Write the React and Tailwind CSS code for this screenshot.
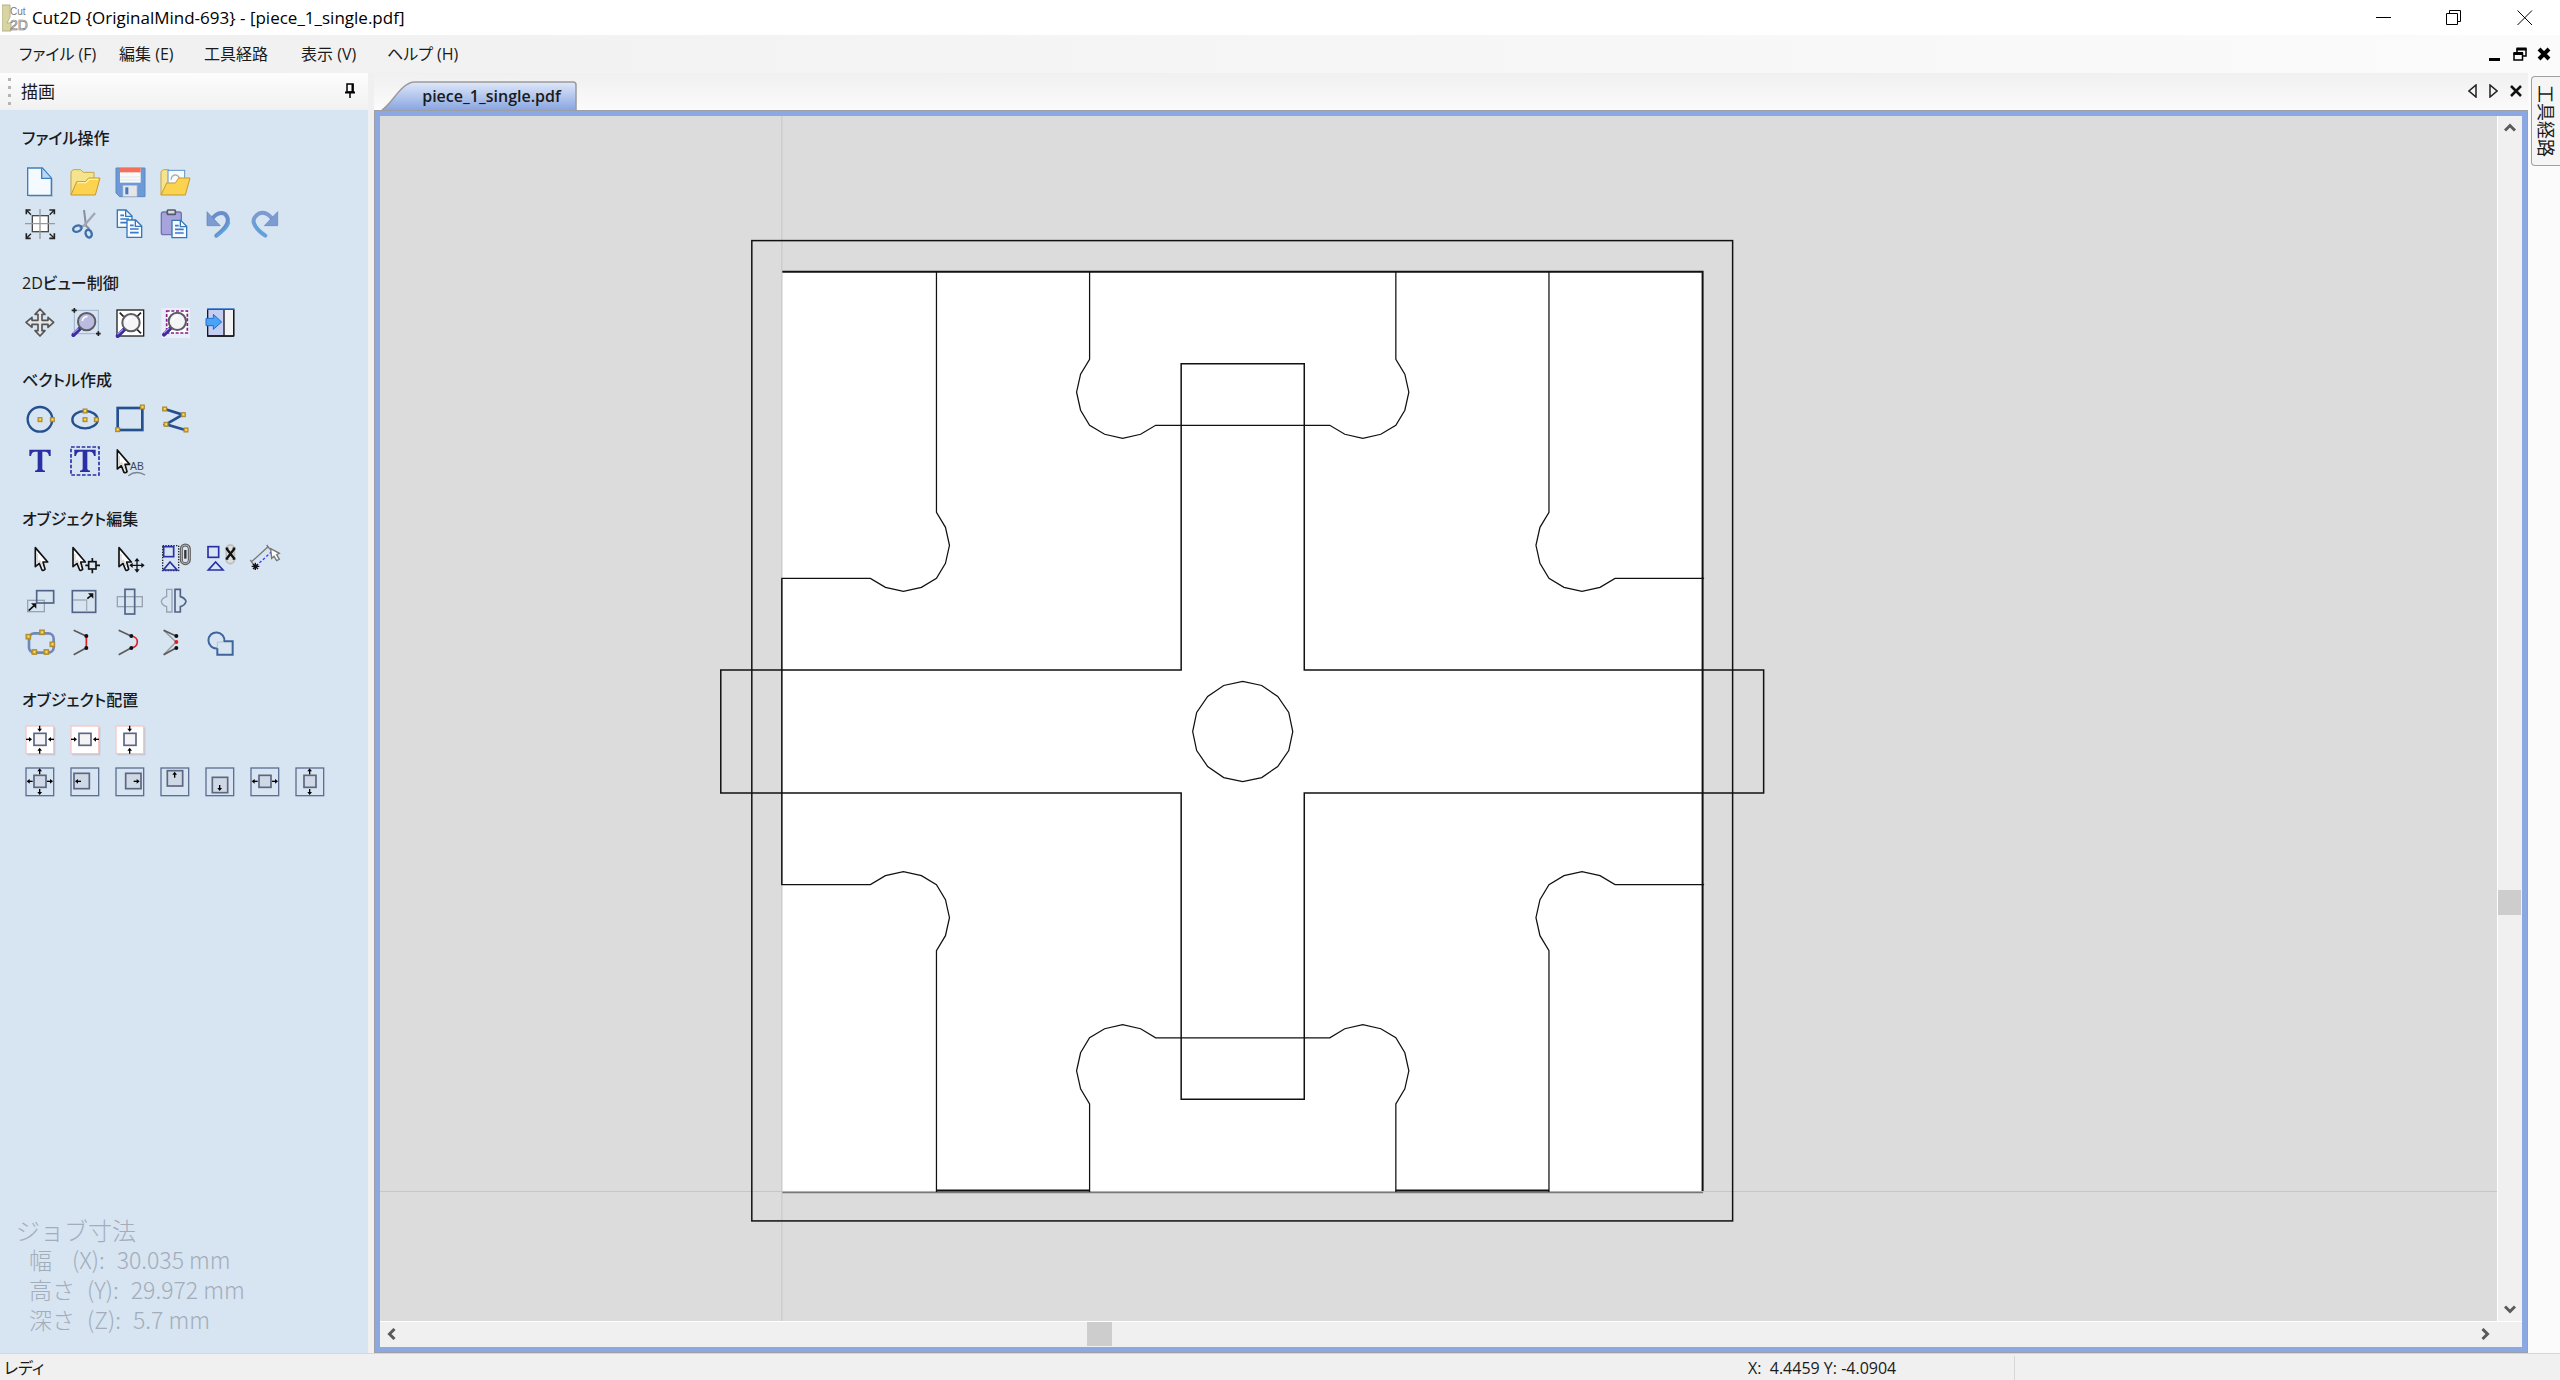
import React from 'react';

const SANS = "font-['Open_Sans','Noto_Sans_CJK_JP',sans-serif]";

/* ---------- shared icon pieces (90 x 90 grid) ---------- */

const Svg = ({ children }) => (
  <svg viewBox="0 0 90 90" className="size-[30px] overflow-visible" fill="none" aria-hidden="true">
    {children}
  </svg>
);

const Node = ({ x, y, s = 12 }) => (
  <g>
    <rect x={x - s / 2} y={y - s / 2} width={s} height={s} fill="#d9a62a" stroke="#a8882f" strokeWidth="3" />
    <rect x={x - 2} y={y - 3} width="5" height="5" fill="#ffe873" />
  </g>
);

const Pointer = ({ x = 0, y = 0, k = 1 }) => (
  <g transform={`translate(${x} ${y}) scale(${k})`}>
    <path d="M2 1V58L14 48L22 68Q27 71 31 66L25 44H39Z" fill="#fff" stroke="#111" strokeWidth="5" strokeLinejoin="round" />
    <path d="M8 20V46L15 39L24 58" stroke="#d5d5d5" strokeWidth="4" />
  </g>
);

const Lens = ({ x, y, r, fill }) => (
  <g>
    <path d={`M${x - r * 0.7} ${y + r * 0.7}L${x - r - 14} ${y + r + 14}`} stroke="#3d2a9e" strokeWidth="12" strokeLinecap="round" />
    <path d={`M${x - r * 0.8 - 4} ${y + r * 0.7 + 2}L${x - r - 15} ${y + r + 9}`} stroke="#a79be8" strokeWidth="4" />
    <circle cx={x} cy={y} r={r} fill={fill} stroke="#5c5c64" strokeWidth="6" />
    <path d={`M${x - r * 0.5} ${y - r * 0.1}Q${x - r * 0.4} ${y - r * 0.6} ${x + r * 0.1} ${y - r * 0.6}`} stroke="#fff" strokeWidth="5" />
  </g>
);

const TinyArrow = ({ x, y, dir }) => {
  const turn = { right: 0, down: 90, left: 180, up: 270 }[dir];
  return (
    <g transform={`translate(${x} ${y}) rotate(${turn})`}>
      <path d="M-9 0H4" stroke="#000" strokeWidth="4" />
      <path d="M0 -7L9 0L0 7Z" fill="#000" />
    </g>
  );
};

/* ---------- icons ---------- */

const NewFile = () => (
  <Svg>
    <path d="M12 6H56L84 36V90H12Z" fill="#9db3c8" opacity=".6" />
    <path d="M8 3H52L79 33V85H8Z" fill="#f4faff" stroke="#3c7fbd" strokeWidth="4" />
    <path d="M50 4V34H78" fill="#b9d9f5" stroke="#3c7fbd" strokeWidth="4" />
  </Svg>
);

const OpenFolder = () => (
  <Svg>
    <path d="M3 84V14L10 8H32L40 16H72V36" fill="#f6e38e" stroke="#c2a54a" strokeWidth="3" />
    <path d="M3 84L20 44H46L56 33H90L76 84Z" fill="#fbd34f" stroke="#c39a2e" strokeWidth="3" />
    <path d="M22 47H48L57 37H84" stroke="#fff1a8" strokeWidth="4" />
  </Svg>
);

const Save = () => (
  <Svg>
    <path d="M3 3H90V89H14L3 78Z" fill="#6c9ad6" stroke="#5c86c0" strokeWidth="3" />
    <rect x="15" y="3" width="62" height="44" fill="#fafafa" />
    <rect x="15" y="3" width="62" height="13" fill="#f4705c" />
    <path d="M15 30H77M15 39H77" stroke="#dfe6ee" strokeWidth="3" />
    <rect x="24" y="55" width="42" height="33" fill="#e4e6ea" stroke="#b9bec8" strokeWidth="2" />
    <rect x="31" y="61" width="9" height="21" fill="#3f78bd" />
  </Svg>
);

const OpenSheet = () => (
  <Svg>
    <path d="M3 84V14L10 8H26L32 14V84" fill="#f6e38e" stroke="#c2a54a" strokeWidth="3" />
    <rect x="24" y="10" width="50" height="44" fill="#f7fbff" stroke="#5b95cc" strokeWidth="3" />
    <path d="M34 38A12 12 0 1 1 58 34" stroke="#a9a9a9" strokeWidth="4" />
    <path d="M3 84L20 48H46L56 33H90L76 84Z" fill="#fbd34f" stroke="#c39a2e" strokeWidth="3" />
  </Svg>
);

const JobSetup = () => (
  <Svg>
    <rect x="22" y="20" width="48" height="48" fill="#fff" stroke="#4a4a4a" strokeWidth="4" />
    <path d="M45 0V90M0 44H90" stroke="#9a9a9a" strokeWidth="4" />
    <path d="M4 16V3H17M73 3H88V16M4 73V88H17M73 88H88V73" stroke="#222" strokeWidth="5" />
    <path d="M4 3L18 17M88 3L74 17M4 88L18 74M88 88L74 74" stroke="#222" strokeWidth="4" />
  </Svg>
);

const Cut = () => (
  <Svg>
    <path d="M42 3L48 50L58 60" stroke="#8a8f9d" strokeWidth="6" />
    <path d="M75 12L42 50L28 56" stroke="#a2a7b5" strokeWidth="7" />
    <ellipse cx="22" cy="59" rx="13" ry="9" stroke="#3f6fa9" strokeWidth="7" transform="rotate(-20 22 59)" />
    <ellipse cx="56" cy="74" rx="9" ry="12" stroke="#3f6fa9" strokeWidth="7" transform="rotate(-20 56 74)" />
  </Svg>
);

const Sheet = ({ x, y }) => (
  <g transform={`translate(${x} ${y})`}>
    <path d="M0 0H26L44 18V52H0Z" fill="#f7fbff" stroke="#3578b8" strokeWidth="4" />
    <path d="M25 0V19H44" stroke="#3578b8" strokeWidth="4" />
    <path d="M9 16H20M9 27H35M9 38H35" stroke="#3b79c9" strokeWidth="5" />
  </g>
);

const Copy = () => (
  <Svg>
    <Sheet x={7} y={3} />
    <Sheet x={36} y={33} />
  </Svg>
);

const Paste = () => (
  <Svg>
    <rect x="4" y="9" width="60" height="68" rx="6" fill="#a6a3dd" stroke="#6f73b4" strokeWidth="4" />
    <rect x="22" y="3" width="24" height="13" rx="2" fill="#d9d9e2" stroke="#555a6a" strokeWidth="5" />
    <Sheet x={36} y={34} />
  </Svg>
);

const Undo = () => (
  <Svg>
    <path d="M16 36Q38 4 60 15Q86 40 34 80" stroke="#6a8ecb" strokeWidth="12" strokeLinecap="round" />
    <path d="M6 8V50H46Z" fill="#7c9bd0" stroke="#5f83bf" strokeWidth="2" />
    <path d="M72 42Q66 62 36 80" stroke="#5aa4dc" strokeWidth="7" strokeLinecap="round" />
  </Svg>
);

const Redo = () => (
  <Svg>
    <path d="M72 36Q50 4 28 13Q-14 38 46 80" stroke="#7c9bd0" strokeWidth="12" strokeLinecap="round" />
    <path d="M83 8V50H43Z" fill="#7c9bd0" stroke="#5f83bf" strokeWidth="2" />
    <path d="M14 42Q18 60 45 80" stroke="#5aa4dc" strokeWidth="7" strokeLinecap="round" />
  </Svg>
);

const Pan = () => (
  <Svg>
    <path
      d="M45 3L60 19H51V37H69V28L86 43L69 58V49H51V68H60L45 84L30 68H39V49H21V58L3 43L21 28V37H39V19H30Z"
      fill="#e6e6e6"
      stroke="#555"
      strokeWidth="5"
      strokeLinejoin="round"
    />
  </Svg>
);

const ZoomInteractive = () => (
  <Svg>
    <rect x="13" y="7" width="72" height="70" stroke="#9fb3d0" strokeWidth="3" />
    <path d="M13 0V14M5 7H20M85 70V84M78 77H92" stroke="#222" strokeWidth="5" />
    <Lens x={50} y={41} r={26} fill="#b9bce0" />
  </Svg>
);

const ZoomBox = () => (
  <Svg>
    <rect x="6" y="6" width="80" height="78" fill="#fff" stroke="#222" strokeWidth="4" />
    <path d="M14 14L26 26M78 14L66 26M78 76L66 64" stroke="#222" strokeWidth="5" />
    <Lens x={48} y={44} r={26} fill="#f5f5f8" />
  </Svg>
);

const ZoomSelected = () => (
  <Svg>
    <rect x="4" y="0" width="86" height="90" fill="#e9eef8" />
    <rect x="20" y="9" width="62" height="66" fill="#fff" stroke="#8a1a8a" strokeWidth="5" strokeDasharray="9 5" />
    <Lens x={52} y={40} r={26} fill="#f5f5f8" />
  </Svg>
);

const SwitchView = () => (
  <Svg>
    <path d="M8 4H86V84H8Z" fill="#c5cef0" stroke="#16181d" strokeWidth="4" />
    <rect x="58" y="6" width="26" height="76" fill="#f2f2f4" />
    <path d="M57 4V84M86 4V84M8 84H86" stroke="#16181d" strokeWidth="4" />
    <path d="M6 3H88" stroke="#2f7fe0" strokeWidth="4" />
    <path d="M3 31H25V19L50 42L25 64V53H3Z" fill="#4aa3f7" stroke="#1f6fd0" strokeWidth="3" />
  </Svg>
);

const CircleTool = () => (
  <Svg>
    <circle cx="45" cy="43" r="37" stroke="#24508f" strokeWidth="7" />
    <Node x={45} y={44} />
    <Node x={82} y={44} />
  </Svg>
);

const EllipseTool = () => (
  <Svg>
    <ellipse cx="45" cy="44" rx="38" ry="26" stroke="#24508f" strokeWidth="7" />
    <Node x={45} y={18} />
    <Node x={45} y={44} />
    <Node x={79} y={44} />
  </Svg>
);

const RectTool = () => (
  <Svg>
    <rect x="8" y="9" width="74" height="66" stroke="#24508f" strokeWidth="8" />
    <Node x={82} y={6} />
    <Node x={8} y={74} />
  </Svg>
);

const PolylineTool = () => (
  <Svg>
    <path d="M14 12L68 29L18 58L76 75" stroke="#24508f" strokeWidth="8" />
    <Node x={14} y={12} />
    <Node x={70} y={29} />
    <Node x={18} y={58} />
    <Node x={78} y={75} />
  </Svg>
);

const SerifT = () => (
  <path d="M13 8H77V27H72Q70 14 60 14H52V66Q52 70 60 71V75H30V71Q38 70 38 66V14H30Q20 14 18 27H13Z" fill="#2a2fa6" />
);

const TextTool = () => (
  <Svg>
    <SerifT />
  </Svg>
);

const AutoText = () => (
  <Svg>
    <rect x="3" y="0" width="84" height="84" stroke="#2a2fa6" strokeWidth="5" strokeDasharray="11 5" />
    <SerifT />
  </Svg>
);

const TextSelect = () => (
  <Svg>
    <Pointer x={5} y={8} />
    <text x="45" y="70" fontSize="31" fill="#3d4856" className="font-['Liberation_Sans',sans-serif]">AB</text>
    <path d="M40 86Q64 68 90 84" stroke="#76828f" strokeWidth="4" />
  </Svg>
);

const SelectTool = () => (
  <Svg>
    <Pointer x={29} y={10} />
  </Svg>
);

const NodeEdit = () => (
  <Svg>
    <Pointer x={7} y={10} />
    <rect x="56" y="53" width="22" height="22" stroke="#111" strokeWidth="5" />
    <path d="M67 42V54M67 76V88M46 64H56M78 64H90" stroke="#111" strokeWidth="5" />
  </Svg>
);

const TransformTool = () => (
  <Svg>
    <Pointer x={10} y={10} />
    <path d="M66 46V82M48 64H84" stroke="#111" strokeWidth="4" />
    <path d="M66 42L74 52H58ZM66 86L74 76H58ZM43 64L53 56V72ZM89 64L79 56V72Z" fill="#111" />
  </Svg>
);

const GroupTool = () => (
  <Svg>
    <rect x="8" y="5" width="48" height="75" stroke="#222" strokeWidth="4" strokeDasharray="4 4" />
    <rect x="11" y="8" width="30" height="30" stroke="#2a2fa6" strokeWidth="5" />
    <path d="M30 54L51 78H10Z" stroke="#2a2fa6" strokeWidth="5" />
    <rect x="64" y="3" width="24" height="56" rx="12" stroke="#5a5a5a" strokeWidth="9" />
    <rect x="64" y="3" width="24" height="56" rx="12" stroke="#bbb" strokeWidth="3" />
    <path d="M76 18V44" stroke="#333" strokeWidth="7" />
  </Svg>
);

const UngroupTool = () => (
  <Svg>
    <rect x="9" y="8" width="32" height="32" stroke="#2a2fa6" strokeWidth="5" />
    <path d="M32 54L54 78H10Z" stroke="#2a2fa6" strokeWidth="5" />
    <rect x="64" y="3" width="24" height="56" rx="12" stroke="#bbb" strokeWidth="5" fill="#ddd" />
    <path d="M65 14L88 44M88 14L65 44M62 14H70M83 14H91M62 44H70M83 44H91" stroke="#111" strokeWidth="7" />
  </Svg>
);

const Measure = () => (
  <Svg>
    <path d="M4 54L54 8M1 48L12 64M50 3L60 16" stroke="#777" strokeWidth="4" />
    <path d="M18 66L66 22" stroke="#3a3aff" strokeWidth="4" strokeDasharray="8 6" />
    <path d="M16 56V78M5 67H28M9 60L24 75M24 60L9 75" stroke="#111" strokeWidth="4" />
    <path d="M62 14L88 28L80 32L88 46L80 50L72 37L65 43Z" fill="#fff" stroke="#777" strokeWidth="4" />
  </Svg>
);

const MoveTool = () => (
  <Svg>
    <rect x="8" y="43" width="50" height="34" stroke="#9aa4b0" strokeWidth="4" />
    <rect x="35" y="14" width="51" height="37" stroke="#516488" strokeWidth="5" />
    <path d="M11 74L28 58" stroke="#111" strokeWidth="5" />
    <path d="M34 52V68L18 52Z" fill="#111" />
  </Svg>
);

const SizeTool = () => (
  <Svg>
    <rect x="7" y="14" width="70" height="65" stroke="#516488" strokeWidth="5" />
    <path d="M9 42H50V77" stroke="#a5adb8" strokeWidth="4" />
    <path d="M52 38L64 28" stroke="#111" strokeWidth="5" />
    <path d="M70 22V38L54 22Z" fill="#111" />
  </Svg>
);

const RotateTool = () => (
  <Svg>
    <rect x="7" y="32" width="75" height="30" stroke="#9aa4b0" strokeWidth="4" />
    <rect x="30" y="10" width="29" height="74" stroke="#516488" strokeWidth="5" />
  </Svg>
);

const MirrorTool = () => (
  <Svg>
    <path d="M36 10H20V32Q6 36 4 46Q6 58 20 62V78H36Z" stroke="#9aa4b0" strokeWidth="4" />
    <path d="M45 10H61V32Q75 36 78 46Q75 58 61 62V78H45Z" stroke="#516488" strokeWidth="5" />
  </Svg>
);

const FitCurves = () => (
  <Svg>
    <rect x="12" y="16" width="74" height="58" rx="16" stroke="#7089b4" strokeWidth="8" />
    <Node x={10} y={26} s={14} />
    <Node x={51} y={13} s={14} />
    <Node x={82} y={49} s={14} />
    <Node x={64} y={72} s={14} />
    <Node x={28} y={72} s={14} />
  </Svg>
);

const JoinLine = () => (
  <Svg>
    <path d="M11 7L48 24M11 80L48 60" stroke="#5a5a5a" strokeWidth="5" />
    <path d="M49 24V60" stroke="#e02020" strokeWidth="5" />
    <circle cx="49" cy="24" r="6" fill="#111" />
    <circle cx="49" cy="60" r="6" fill="#111" />
  </Svg>
);

const JoinCurve = () => (
  <Svg>
    <path d="M11 7L48 24M11 80L48 60" stroke="#5a5a5a" strokeWidth="5" />
    <path d="M49 24Q68 28 67 42Q66 57 49 60" stroke="#e02020" strokeWidth="5" />
    <circle cx="49" cy="24" r="6" fill="#111" />
    <circle cx="49" cy="60" r="6" fill="#111" />
  </Svg>
);

const JoinMove = () => (
  <Svg>
    <path d="M11 7L48 42L11 80" stroke="#999" strokeWidth="4" />
    <path d="M11 7L48 24M11 80L48 60" stroke="#5a5a5a" strokeWidth="5" />
    <circle cx="49" cy="24" r="6" fill="#111" />
    <circle cx="49" cy="60" r="6" fill="#111" />
    <circle cx="49" cy="42" r="6" fill="#e02020" />
  </Svg>
);

const Weld = () => (
  <Svg>
    <path d="M56 40H83V80H37V61" stroke="#3f659c" strokeWidth="6" />
    <path d="M37 61A24 24 0 1 1 58 41" stroke="#3f659c" strokeWidth="6" />
    <path d="M37 59V42H56" stroke="#b5c2d4" strokeWidth="3" />
  </Svg>
);

/* Alignment icons: a small box inside a frame with arrows on the given sides */
const Align = ({ frame, box, arrows }) => (
  <Svg>
    {frame === 'page' ? (
      <>
        <rect x="7" y="7" width="84" height="84" fill="#a9b5c2" opacity=".6" />
        <rect x="3" y="3" width="83" height="83" fill="#fff" stroke="#f6c6c6" strokeWidth="4" />
      </>
    ) : (
      <rect x="3" y="3" width="83" height="83" stroke="#5e6f91" strokeWidth="4" />
    )}
    <rect x={box[0]} y={box[1]} width={box[2]} height={box[3]} fill={frame === 'page' ? '#f4f4f4' : '#cfd9e5'} stroke="#5e6580" strokeWidth="5" />
    {arrows.map(([x, y, dir]) => (
      <TinyArrow key={`${x}-${y}`} x={x} y={y} dir={dir} />
    ))}
  </Svg>
);

const MID = [27, 25, 36, 36];
const H_OUT = [[14, 43, 'left'], [75, 43, 'right']];
const V_OUT = [[44, 13, 'up'], [44, 75, 'down']];
const H_IN = [[12, 43, 'right'], [78, 43, 'left']];
const V_IN = [[44, 11, 'down'], [44, 77, 'up']];

const SECTIONS = [
  {
    title: 'ファイル操作',
    rows: [
      [['新規', <NewFile />], ['開く', <OpenFolder />], ['保存', <Save />], ['インポート', <OpenSheet />]],
      [['ジョブ設定', <JobSetup />], ['切り取り', <Cut />], ['コピー', <Copy />], ['貼り付け', <Paste />], ['元に戻す', <Undo />], ['やり直し', <Redo />]],
    ],
  },
  {
    title: '2Dビュー制御',
    rows: [[['移動', <Pan />], ['ズーム', <ZoomInteractive />], ['全体表示', <ZoomBox />], ['選択を表示', <ZoomSelected />], ['ビュー切替', <SwitchView />]]],
  },
  {
    title: 'ベクトル作成',
    rows: [
      [['円', <CircleTool />], ['楕円', <EllipseTool />], ['四角形', <RectTool />], ['線', <PolylineTool />]],
      [['文字', <TextTool />], ['自動文字', <AutoText />], ['文字編集', <TextSelect />]],
    ],
  },
  {
    title: 'オブジェクト編集',
    rows: [
      [['選択', <SelectTool />], ['ノード編集', <NodeEdit />], ['変形', <TransformTool />], ['グループ化', <GroupTool />], ['グループ解除', <UngroupTool />], ['計測', <Measure />]],
      [['位置', <MoveTool />], ['サイズ', <SizeTool />], ['回転', <RotateTool />], ['ミラー', <MirrorTool />]],
      [['曲線近似', <FitCurves />], ['直線結合', <JoinLine />], ['曲線結合', <JoinCurve />], ['移動結合', <JoinMove />], ['結合', <Weld />]],
    ],
  },
  {
    title: 'オブジェクト配置',
    rows: [
      [
        ['材料の中央', <Align frame="page" box={MID} arrows={[...H_IN, ...V_IN]} />],
        ['材料の左右中央', <Align frame="page" box={MID} arrows={H_IN} />],
        ['材料の上下中央', <Align frame="page" box={MID} arrows={V_IN} />],
      ],
      [
        ['中央', <Align box={MID} arrows={[...H_OUT, ...V_OUT]} />],
        ['左揃え', <Align box={[12, 19, 46, 46]} arrows={[[24, 43, 'left']]} />],
        ['右揃え', <Align box={[32, 19, 46, 46]} arrows={[[65, 43, 'right']]} />],
        ['上揃え', <Align box={[22, 11, 46, 46]} arrows={[[44, 23, 'up']]} />],
        ['下揃え', <Align box={[22, 31, 46, 46]} arrows={[[44, 63, 'down']]} />],
        ['左右中央', <Align box={MID} arrows={H_OUT} />],
        ['上下中央', <Align box={MID} arrows={V_OUT} />],
      ],
    ],
  },
];

/* ---------- drawing geometry ---------- */

const arc = (cx, cy, r, from, to) => {
  const steps = Math.round(Math.abs(to - from) / 22.5);
  return Array.from({ length: steps + 1 }, (_, i) => {
    const a = ((from + ((to - from) * i) / steps) * Math.PI) / 180;
    return `${Math.round(cx + r * Math.cos(a))},${Math.round(cy + r * Math.sin(a))}`;
  });
};

const CORNER = ['937,272', ...arc(904, 546, 46, -45, 135), '782,579'].join(' ');
const NOTCH = ['1090,272', ...arc(1123, 393, 46, 225, 45), ...arc(1363, 393, 46, 135, -45), '1396,272'].join(' ');

const Drawing = () => (
  <svg
    viewBox="381 117 2116 1204"
    preserveAspectRatio="xMinYMin slice"
    className="block h-full w-full"
    fill="none"
    stroke="#111"
    strokeWidth="1.5"
    role="img"
    aria-label="piece_1_single.pdf"
  >
    <rect x="783" y="273" width="919" height="918" fill="#fff" stroke="none" />
    <path d="M782.5 116V1330M380 1191.5H2510" stroke="#c6c6c6" strokeWidth="1" />
    <path d="M783 1192.5H1703" stroke="#777" strokeWidth="1.5" />
    <path d="M783 272.5H1702.5V1191" strokeWidth="2" />
    <path d="M782.5 579V885" strokeWidth="1.5" />
    <rect x="752.5" y="241.5" width="980" height="979.5" />
    <polygon points="1181.5,364.5 1304.5,364.5 1304.5,670.5 1763.5,670.5 1763.5,793.5 1304.5,793.5 1304.5,1099.5 1181.5,1099.5 1181.5,793.5 721.5,793.5 721.5,670.5 1181.5,670.5" />
    <path d="M937 1190.5H1090M1396 1190.5H1549" strokeWidth="2" />
    <polygon points={arc(1243, 732, 50, 0, 360).join(' ')} strokeWidth="1.25" />
    <g strokeWidth="1.25">
      <polyline points={CORNER} />
      <polyline points={CORNER} transform="matrix(-1 0 0 1 2486 0)" />
      <polyline points={CORNER} transform="matrix(1 0 0 -1 0 1464)" />
      <polyline points={CORNER} transform="matrix(-1 0 0 -1 2486 1464)" />
      <polyline points={NOTCH} />
      <polyline points={NOTCH} transform="matrix(1 0 0 -1 0 1464)" />
    </g>
  </svg>
);

/* ---------- chrome ---------- */

const Chevron = ({ turn }) => (
  <svg viewBox="0 0 12 12" className="size-3" aria-hidden="true">
    <path d="M1 8.500L6 3.500L11 8.500" fill="none" stroke="#5a5a5a" strokeWidth="3" transform={`rotate(${turn} 6 6)`} />
  </svg>
);

const ScrollButton = ({ label, turn }) => (
  <button type="button" aria-label={label} className="flex size-6 shrink-0 items-center justify-center">
    <Chevron turn={turn} />
  </button>
);

const AppIcon = () => (
  <svg viewBox="0 0 26 30" className="h-[30px] w-[26px]" aria-hidden="true">
    <path d="M0 2H8V14L5 20H9V28H0Z" fill="#d8d5a4" stroke="#b5b28a" />
    <text x="8" y="12" fontSize="10" fill="#7a7a7a" className="font-['Liberation_Sans',sans-serif]">Cut</text>
    <text x="8" y="27" fontSize="14" fill="none" stroke="#777" strokeWidth=".7" className="font-['Liberation_Sans',sans-serif]">2D</text>
  </svg>
);

const TitleBar = () => (
  <header className="flex h-[35px] items-center bg-white pl-0.5">
    <AppIcon />
    <h1 className="ml-1 text-[17px] leading-6 text-black">Cut2D {'{OriginalMind-693}'} - [piece_1_single.pdf]</h1>
    <div className="ml-auto flex">
      <button type="button" aria-label="最小化" className="flex h-[35px] w-[70px] items-center justify-center">
        <svg viewBox="0 0 16 16" className="size-4"><path d="M0 7.500H15" stroke="#000" /></svg>
      </button>
      <button type="button" aria-label="元のサイズに戻す" className="flex h-[35px] w-[70px] items-center justify-center">
        <svg viewBox="0 0 16 16" className="size-4" fill="none" stroke="#000"><path d="M.5 3.500H11.500V14.500H.5ZM3.500 3.500V.5H14.500V11.500H11.500" /></svg>
      </button>
      <button type="button" aria-label="閉じる" className="flex h-[35px] w-[71px] items-center justify-center">
        <svg viewBox="0 0 16 16" className="size-4" stroke="#000"><path d="M.5 .5L15 15M15 .5L.5 15" /></svg>
      </button>
    </div>
  </header>
);

const MENUS = ['ファイル (F)', '編集 (E)', '工具経路', '表示 (V)', 'ヘルプ (H)'];

const MenuBar = () => (
  <nav className="flex h-[38px] items-center bg-linear-to-r from-[#f0f0f0] to-[#fbfbfb] pl-[19px]">
    <div className="grid grid-cols-[100px_85px_97px_86px_86px] text-base leading-6 whitespace-nowrap [font-feature-settings:'palt']">
      {MENUS.map((m) => (
        <button key={m} type="button" className="text-left">
          {m}
        </button>
      ))}
    </div>
    <div className="ml-auto flex items-center gap-2.5 pr-[9px]">
      <button type="button" aria-label="子ウィンドウを最小化" className="flex size-3.5 items-end">
        <span className="h-[3px] w-[11px] bg-black" />
      </button>
      <button type="button" aria-label="子ウィンドウを戻す">
        <svg viewBox="0 0 14 14" className="size-3.5" fill="none" stroke="#000" strokeWidth="1.500"><path d="M1 6.500H9.500V13H1ZM4 5V2H13V9H10" /><path d="M.5 6.500H10M3.500 2H13.500" strokeWidth="3" /></svg>
      </button>
      <button type="button" aria-label="子ウィンドウを閉じる">
        <svg viewBox="0 0 14 14" className="size-3.5" stroke="#000" strokeWidth="4"><path d="M2 2L12 12M12 2L2 12" /></svg>
      </button>
    </div>
  </nav>
);

const SidePanel = () => (
  <aside className="flex w-[368px] shrink-0 flex-col">
    <div className="flex h-[37px] items-center bg-linear-to-b from-[#fdfdfd] to-[#f1f1f1] pr-3 pl-2">
      <div className="flex flex-col gap-[5px]">
        {[0, 1, 2, 3].map((i) => (
          <span key={i} className="size-[3px] bg-[#b5b5b5]" />
        ))}
      </div>
      <h2 className="ml-2.5 text-[17px] leading-6">描画</h2>
      <button type="button" aria-label="自動的に隠す" className="mb-0.5 ml-auto">
        <svg viewBox="0 0 12 16" className="h-4 w-3" fill="none" stroke="#000"><path d="M3 1H9V9H3ZM6 9V15" strokeWidth="1.500" /><path d="M8.500 1V9" strokeWidth="2" /><path d="M1 9.500H11" strokeWidth="2" /></svg>
      </button>
    </div>
    <div className="flex flex-1 flex-col bg-[#d7e4f2] pt-4 pb-[19px]">
      <div className="flex flex-col gap-6">
        {SECTIONS.map((s, i) => (
          <section key={s.title} className={i === 0 ? 'flex flex-col pb-0.5' : 'flex flex-col'}>
            <h3 className={`pl-[22px] text-base leading-6 font-medium [font-feature-settings:'palt'] ${i === 0 ? 'mb-[11px]' : 'mb-[7px]'}`}>{s.title}</h3>
            {s.rows.map((row, r) => (
              <div key={r} className="flex pl-[17px]">
                {row.map(([label, icon]) => (
                  <button key={label} type="button" aria-label={label} title={label} className="flex h-[42px] w-[45px] items-center justify-center">
                    {icon}
                  </button>
                ))}
              </div>
            ))}
          </section>
        ))}
      </div>
      <div className="mt-auto font-['Noto_Sans_CJK_JP',sans-serif] font-light text-[#a3adb9]">
        <h3 className="pl-4 text-2xl leading-7 font-light">ジョブ寸法</h3>
        <dl className="pl-[29px] text-[23px] leading-[30px]">
          <div className="flex gap-3">
            <dt className="flex gap-5"><span>幅</span><span>(X):</span></dt>
            <dd>30.035 mm</dd>
          </div>
          <div className="flex gap-3">
            <dt className="flex gap-3"><span>高さ</span><span>(Y):</span></dt>
            <dd>29.972 mm</dd>
          </div>
          <div className="flex gap-3">
            <dt className="flex gap-3"><span>深さ</span><span>(Z):</span></dt>
            <dd>5.7 mm</dd>
          </div>
        </dl>
      </div>
    </div>
  </aside>
);

const TabStrip = () => (
  <div className="flex h-[37px] items-end bg-linear-to-b from-[#f0f0f0] to-[#fbfbfb] pl-[7px]">
    <button type="button" className="relative h-[29px] w-[197px] text-base leading-[26px] font-semibold">
      <svg viewBox="0 0 197 29" className="absolute inset-0 h-full w-full" aria-hidden="true">
        <defs>
          <linearGradient id="tab" x1="0" y1="0" x2="0" y2="1">
            <stop offset="0" stopColor="#dfe8fa" />
            <stop offset="1" stopColor="#8aa6e0" />
          </linearGradient>
        </defs>
        <path d="M1 29C12 22 20 1 34 1H192Q195 1 195 4V29" fill="url(#tab)" stroke="#9a9a9a" strokeWidth="1.500" />
      </svg>
      <span className="relative pl-6">piece_1_single.pdf</span>
    </button>
    <div className="ml-auto flex items-center gap-3 self-center pr-1.5 pb-0.5">
      <button type="button" aria-label="前のタブ">
        <svg viewBox="0 0 9 14" className="h-3.5 w-[9px]" fill="none" stroke="#222" strokeWidth="1.500"><path d="M8 1V13L1 7Z" /></svg>
      </button>
      <button type="button" aria-label="次のタブ">
        <svg viewBox="0 0 9 14" className="h-3.5 w-[9px]" fill="none" stroke="#222" strokeWidth="1.500"><path d="M1 1V13L8 7Z" /></svg>
      </button>
      <button type="button" aria-label="タブを閉じる">
        <svg viewBox="0 0 12 12" className="size-3" stroke="#111" strokeWidth="2.500"><path d="M1 1L11 11M11 1L1 11" /></svg>
      </button>
    </div>
  </div>
);

const Workspace = () => (
  <main className="flex min-w-0 flex-1 flex-col">
    <TabStrip />
    <div className="flex min-h-0 flex-1 flex-col border border-[#9c9fa6] bg-[#8ba8e2] p-[5px]">
      <div className="flex min-h-0 flex-1">
        <div className="min-w-0 flex-1 overflow-hidden bg-[#dcdcdc]">
          <Drawing />
        </div>
        <div className="flex w-[25px] flex-col border-l border-white bg-[#f0f0f0]">
          <ScrollButton label="上へ" turn={0} />
          <div className="flex-[749]" />
          <div className="mr-px h-[25px] bg-[#cdcdcd]" />
          <div className="flex-[381]" />
          <ScrollButton label="下へ" turn={180} />
        </div>
      </div>
      <div className="flex h-[26px] border-t border-white bg-[#f0f0f0] pr-[25px]">
        <ScrollButton label="左へ" turn={270} />
        <div className="flex-[682]" />
        <div className="mb-px w-[25px] bg-[#cdcdcd]" />
        <div className="flex-[1360]" />
        <ScrollButton label="右へ" turn={90} />
      </div>
    </div>
  </main>
);

const StatusBar = () => (
  <footer className="flex h-[27px] items-center border-t border-[#d7d7d7] bg-[#f0f0f0] pt-0.5 text-base leading-6">
    <span className="pl-1 [font-feature-settings:'palt']">レディ</span>
    <span className="ml-auto w-[267px] border-r border-[#d7d7d7] whitespace-pre">X:  4.4459 Y: -4.0904</span>
    <span className="w-[545px]" />
  </footer>
);

export default function App() {
  return (
    <div className={`flex h-screen flex-col overflow-hidden bg-[#f0f0f0] text-[#1a1a1a] ${SANS}`}>
      <TitleBar />
      <MenuBar />
      <div className="flex min-h-0 flex-1 gap-[6px]">
        <SidePanel />
        <Workspace />
        <div className="-ml-[6px] w-8 shrink-0 bg-[#fbfbfb] pt-[3px] pl-[3px]">
          <button
            type="button"
            className="flex h-[90px] w-full items-center justify-center rounded-l border border-r-0 border-[#a0a0a0] bg-[#f5f5f5] text-[18px] leading-5 [writing-mode:vertical-rl] [text-orientation:sideways]"
          >
            工具経路
          </button>
        </div>
      </div>
      <StatusBar />
    </div>
  );
}
